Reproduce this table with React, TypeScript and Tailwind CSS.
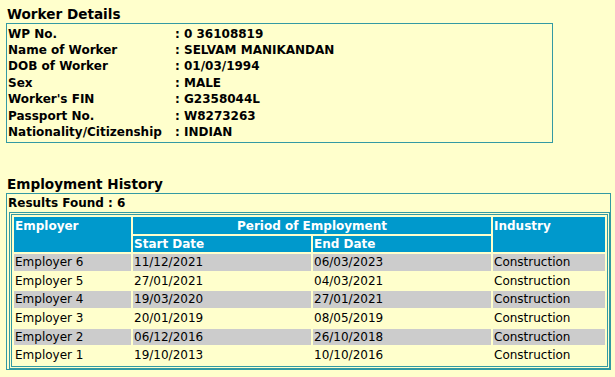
export default function App() {
  const worker: [string, string][] = [
    ["WP No.", "0 36108819"],
    ["Name of Worker", "SELVAM MANIKANDAN"],
    ["DOB of Worker", "01/03/1994"],
    ["Sex", "MALE"],
    ["Worker's FIN", "G2358044L"],
    ["Passport No.", "W8273263"],
    ["Nationality/Citizenship", "INDIAN"],
  ];
  const rows: [string, string, string, string][] = [
    ["Employer 6", "11/12/2021", "06/03/2023", "Construction"],
    ["Employer 5", "27/01/2021", "04/03/2021", "Construction"],
    ["Employer 4", "19/03/2020", "27/01/2021", "Construction"],
    ["Employer 3", "20/01/2019", "08/05/2019", "Construction"],
    ["Employer 2", "06/12/2016", "26/10/2018", "Construction"],
    ["Employer 1", "19/10/2013", "10/10/2016", "Construction"],
  ];
  return (
    <div className="min-h-screen bg-[#ffffcc] pt-[5px] text-black font-['DejaVu_Sans',Verdana,sans-serif]">
      <h2 className="ml-[7px] text-[13.6px] font-bold leading-[18px]">Worker Details</h2>
      <div className="ml-[6px] w-[547px] border border-[#3399a3] pl-px pt-[1.5px] pb-[1.5px]">
        {worker.map(([k, v]) => (
          <div key={k} className="grid grid-cols-[167px_1fr] text-[12px] font-bold leading-[16.4px]">
            <div>{k}</div>
            <div>: {v}</div>
          </div>
        ))}
      </div>

      <h2 className="ml-[7px] mt-[32px] text-[13.6px] font-bold leading-[18px]">Employment History</h2>
      <div className="ml-[6px] w-[605px] border border-[#3399a3]">
        <div className="pl-px text-[12px] font-bold leading-[18px]">Results Found : 6</div>
        <div className="ml-[2px] w-fit border border-[#3399a3] p-px">
          <table className="border border-[#3399a3] border-separate border-spacing-[2px] text-[12px]">
            <colgroup>
              <col className="w-[117px]" />
              <col className="w-[178px]" />
              <col className="w-[178px]" />
              <col className="w-[112px]" />
            </colgroup>
            <thead>
              <tr>
                <th rowSpan={2} className="bg-[#0099cc] p-0 pl-px pt-px text-left align-top font-bold leading-[16px] text-white">
                  Employer
                </th>
                <th colSpan={2} className="h-[17px] bg-[#0099cc] p-0 pt-px text-center align-top font-bold leading-[16px] text-white">
                  Period of Employment
                </th>
                <th rowSpan={2} className="bg-[#0099cc] p-0 pl-px pt-px text-left align-top font-bold leading-[16px] text-white">
                  Industry
                </th>
              </tr>
              <tr>
                <th className="h-[16px] bg-[#0099cc] p-0 pl-px text-left align-top font-bold leading-[16px] text-white">Start Date</th>
                <th className="h-[16px] bg-[#0099cc] p-0 pl-px text-left align-top font-bold leading-[16px] text-white">End Date</th>
              </tr>
            </thead>
            <tbody>
              {rows.map((r, i) => (
                <tr key={r[0]} className={i % 2 === 0 ? "bg-[#cccccc]" : ""}>
                  {r.map((c, j) => (
                    <td key={j} className="h-[16.7px] p-0 pl-px align-middle leading-[16.7px]">
                      {c}
                    </td>
                  ))}
                </tr>
              ))}
            </tbody>
          </table>
        </div>
      </div>
    </div>
  );
}
